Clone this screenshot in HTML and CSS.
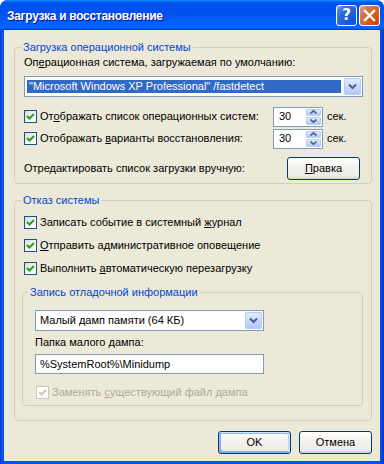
FILE: index.html
```html
<!DOCTYPE html>
<html lang="ru">
<head>
<meta charset="utf-8">
<title>Загрузка и восстановление</title>
<link rel="stylesheet" href="styles.css">
</head>
<body>
<div class="window">
  <div class="titlebar">
    <span class="title">Загрузка и восстановление</span>
    <div class="tb-buttons">
      <span class="tb-btn help">?</span>
      <span class="tb-btn close"><svg width="13" height="13" viewBox="0 0 13 13"><path d="M2 2 L11 11 M11 2 L2 11" stroke="#fff" stroke-width="2.4" stroke-linecap="square"/></svg></span>
    </div>
  </div>
  <div class="body">
    <fieldset class="group g1">
      <legend>Загрузка операционной системы</legend>
      <div class="label">Оп<u>е</u>рационная система, загружаемая по умолчанию:</div>
      <div class="combo sel wide">
        <span class="value">"Microsoft Windows XP Professional" /fastdetect</span>
        <span class="arrow"><svg width="9" height="7" viewBox="0 0 9 7"><path d="M1 1.5 L4.5 5 L8 1.5" fill="none" stroke="#4D6185" stroke-width="2"/></svg></span>
      </div>
      <div class="row r1">
        <span class="cb"><svg width="9" height="9" viewBox="0 0 9 9"><path d="M1 4 L3.5 6.5 L8 2" fill="none" stroke="#21A121" stroke-width="2"/></svg></span>
        <span class="cb-text">От<u>о</u>бражать список операционных систем:</span>
        <span class="spin"><span class="num">30</span><span class="spin-btns"><span class="sb"><svg width="7" height="4" viewBox="0 0 7 4"><path d="M0.5 3.5 L3.5 0.8 L6.5 3.5" fill="none" stroke="#4D6185" stroke-width="1.6"/></svg></span><span class="sb"><svg width="7" height="4" viewBox="0 0 7 4"><path d="M0.5 0.5 L3.5 3.2 L6.5 0.5" fill="none" stroke="#4D6185" stroke-width="1.6"/></svg></span></span></span>
        <span class="unit">сек.</span>
      </div>
      <div class="row r2">
        <span class="cb"><svg width="9" height="9" viewBox="0 0 9 9"><path d="M1 4 L3.5 6.5 L8 2" fill="none" stroke="#21A121" stroke-width="2"/></svg></span>
        <span class="cb-text">Отображать <u>в</u>арианты восстановления:</span>
        <span class="spin"><span class="num">30</span><span class="spin-btns"><span class="sb"><svg width="7" height="4" viewBox="0 0 7 4"><path d="M0.5 3.5 L3.5 0.8 L6.5 3.5" fill="none" stroke="#4D6185" stroke-width="1.6"/></svg></span><span class="sb"><svg width="7" height="4" viewBox="0 0 7 4"><path d="M0.5 0.5 L3.5 3.2 L6.5 0.5" fill="none" stroke="#4D6185" stroke-width="1.6"/></svg></span></span></span>
        <span class="unit">сек.</span>
      </div>
      <div class="row r3">
        <span class="plain">Отредактировать список загрузки вручную:</span>
        <span class="btn edit"><u>П</u>равка</span>
      </div>
    </fieldset>

    <fieldset class="group g2">
      <legend>Отказ системы</legend>
      <div class="crow">
        <span class="cb"><svg width="9" height="9" viewBox="0 0 9 9"><path d="M1 4 L3.5 6.5 L8 2" fill="none" stroke="#21A121" stroke-width="2"/></svg></span>
        <span class="cb-text">Записать событие в системный <u>ж</u>урнал</span>
      </div>
      <div class="crow">
        <span class="cb"><svg width="9" height="9" viewBox="0 0 9 9"><path d="M1 4 L3.5 6.5 L8 2" fill="none" stroke="#21A121" stroke-width="2"/></svg></span>
        <span class="cb-text"><u>О</u>тправить административное оповещение</span>
      </div>
      <div class="crow">
        <span class="cb"><svg width="9" height="9" viewBox="0 0 9 9"><path d="M1 4 L3.5 6.5 L8 2" fill="none" stroke="#21A121" stroke-width="2"/></svg></span>
        <span class="cb-text">Выполнить <u>а</u>втоматическую перезагрузку</span>
      </div>

      <fieldset class="group g3">
        <legend>Запись отладочной информации</legend>
        <div class="combo narrow">
          <span class="value">Малый дамп памяти (64 КБ)</span>
          <span class="arrow"><svg width="9" height="7" viewBox="0 0 9 7"><path d="M1 1.5 L4.5 5 L8 1.5" fill="none" stroke="#4D6185" stroke-width="2"/></svg></span>
        </div>
        <div class="label l2">Папка малого дампа:</div>
        <div class="input">%SystemRoot%\Minidump</div>
        <div class="crow disabled">
          <span class="cb"><svg width="9" height="9" viewBox="0 0 9 9"><path d="M1 4 L3.5 6.5 L8 2" fill="none" stroke="#CAC8BB" stroke-width="2"/></svg></span>
          <span class="cb-text">Заменять <u>с</u>уществующий файл дампа</span>
        </div>
      </fieldset>
    </fieldset>

    <div class="buttons">
      <span class="btn default">OK</span>
      <span class="btn">Отмена</span>
    </div>
  </div>
</div>
</body>
</html>
```

FILE: styles.css
```css
html, body {
  margin: 0;
  padding: 0;
  background: #ffffff;
}

.window {
  width: 384px;
  height: 464px;
  display: flex;
  flex-direction: column;
  background: linear-gradient(90deg, #0831D9 0, #0842E6 1px, #0A56F0 2px, #0054E3 4px, #0054E3 380px, #0A4BE8 382px, #0831D9 383px);
  border-radius: 8px 8px 0 0;
  overflow: hidden;
  font-family: "Liberation Sans", Tahoma, sans-serif;
  font-size: 11px;
  line-height: 13px;
  color: #000;
}

.titlebar {
  height: 30px;
  flex: none;
  box-sizing: border-box;
  display: flex;
  align-items: center;
  padding: 0 4px 0 7px;
  background: linear-gradient(180deg, #0997ff, #0053ee 8%, #0050ee 40%, #0066ff 88%, #0066ff 93%, #005bff 95%, #003dd7 96%, #003dd7);
}

.title {
  flex: 1;
  color: #fff;
  font-weight: bold;
  font-size: 12px;
  letter-spacing: -0.3px;
  line-height: 16px;
  padding-top: 1px;
  text-shadow: 1px 1px #0F1089;
}

.tb-buttons {
  display: flex;
  gap: 2px;
  align-self: flex-start;
  margin-top: 5px;
}

.tb-btn {
  width: 21px;
  height: 21px;
  box-sizing: border-box;
  border: 1px solid #fff;
  border-radius: 3px;
  display: flex;
  align-items: center;
  justify-content: center;
}

.help {
  background: radial-gradient(circle at 90% 90%, #0054E9 0, #2263D5 55%, #4479E4 80%, #A3BBEC 100%);
  color: #fff;
  font-family: "DejaVu Sans", sans-serif;
  font-weight: bold;
  font-size: 15px;
}

.close {
  background: radial-gradient(circle at 90% 90%, #CC4600 0, #DC6527 55%, #CD7356 70%, #E5A48F 100%);
}

.body {
  flex: 1;
  margin: 0 4px 3px 4px;
  background: #ECE9D8;
  padding: 11px 8px 0 10px;
  display: flex;
  flex-direction: column;
}

u {
  text-decoration: underline;
  text-underline-offset: 1px;
}

.group {
  margin: 0;
  min-width: 0;
  border: 1px solid #D0D0BF;
  border-radius: 4px;
  padding: 2px 8px 4px 9px;
}

.group legend {
  color: #0046D5;
  padding: 0 2px;
  margin-left: -3px;
  line-height: 13px;
}

.label {
  height: 13px;
  white-space: nowrap;
}

.combo {
  height: 21px;
  box-sizing: border-box;
  border: 1px solid #7F9DB9;
  background: #fff;
  display: flex;
  padding: 1px;
  margin-top: 7px;
}

.combo .value {
  flex: 1;
  display: flex;
  align-items: center;
  padding-left: 3px;
  white-space: nowrap;
  overflow: hidden;
}

.combo.sel .value {
  background: #316AC5;
  color: #fff;
  margin: 2px 3px 2px 1px;
  padding-left: 2px;
}

.combo .arrow {
  width: 17px;
  box-sizing: border-box;
  border: 1px solid #B9CEF7;
  border-radius: 1px;
  background: linear-gradient(180deg, #E2EAFE 0, #C4D5FC 60%, #B4C8F6 100%);
  display: flex;
  align-items: center;
  justify-content: center;
}

.row {
  display: flex;
  align-items: center;
}

.r1 {
  height: 21px;
  margin-top: 9px;
}

.r2 {
  height: 21px;
  margin-top: 1px;
}

.r3 {
  height: 22px;
  margin-top: 8px;
}

.cb {
  width: 13px;
  height: 13px;
  box-sizing: border-box;
  border: 1px solid #1C5180;
  background: linear-gradient(135deg, #DCDCD7 0, #F7F7F5 60%, #fff 100%);
  flex: none;
  display: flex;
  align-items: center;
  justify-content: center;
}

.cb-text {
  margin-left: 3px;
  white-space: nowrap;
}

.row .cb-text,
.row .plain {
  flex: 1;
}

.spin {
  width: 50px;
  height: 20px;
  box-sizing: border-box;
  border: 1px solid #7F9DB9;
  background: #fff;
  display: flex;
  padding: 1px;
}

.spin .num {
  flex: 1;
  padding-left: 4px;
  display: flex;
  align-items: center;
}

.spin-btns {
  width: 15px;
  display: flex;
  flex-direction: column;
  gap: 1px;
}

.sb {
  flex: 1;
  box-sizing: border-box;
  border: 1px solid #B9CEF7;
  border-radius: 1px;
  background: linear-gradient(180deg, #E2EAFE 0, #C4D5FC 60%, #B4C8F6 100%);
  display: flex;
  align-items: center;
  justify-content: center;
}

.unit {
  width: 40px;
  padding-left: 4px;
  box-sizing: border-box;
}

.btn {
  width: 73px;
  height: 23px;
  box-sizing: border-box;
  border: 1px solid #003C74;
  border-radius: 3px;
  background: linear-gradient(180deg, #fff 0, #F4F3EE 40%, #ECEBE6 86%, #D6D0C5 100%);
  display: flex;
  align-items: center;
  justify-content: center;
  flex: none;
}

.btn.edit {
  margin-right: 3px;
}

.btn.default {
  box-shadow: inset -1px 1px #CEE7FF, inset 1px 2px #98B8EA, inset -2px 2px #BCD4F6, inset 1px -1px #89ADE4, inset 2px -2px #89ADE4;
}

.g2 {
  margin-top: 10px;
  padding: 9px 8px 14px 9px;
}

.crow {
  display: flex;
  align-items: center;
  height: 13px;
}

.crow + .crow {
  margin-top: 10px;
}

.g3 {
  margin: 11px 0 0 -2px;
  padding: 11px 8px 6px 12px;
}

.g3 legend {
  margin-left: -7px;
}

.combo.narrow {
  width: 229px;
  margin-top: 0;
}

.l2 {
  margin-top: 5px;
}

.input {
  width: 229px;
  height: 20px;
  box-sizing: border-box;
  border: 1px solid #7F9DB9;
  background: #fff;
  margin-top: 5px;
  padding-left: 4px;
  display: flex;
  align-items: center;
}

.g3 .crow {
  margin-top: 12px;
  margin-left: 1px;
}

.disabled .cb {
  border-color: #CAC8BB;
  background: #fff;
}

.disabled .cb-text {
  color: #ACA899;
}

.buttons {
  display: flex;
  justify-content: flex-end;
  gap: 8px;
  margin-top: 10px;
}
```
